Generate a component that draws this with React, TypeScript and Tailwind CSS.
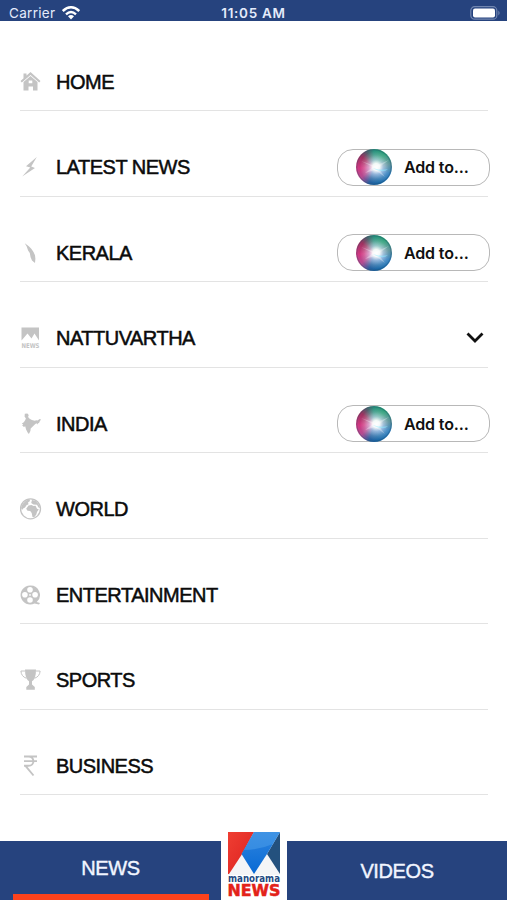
import type { ReactNode } from "react";

const icons: Record<string, ReactNode> = {
  home: (
    <>
      <path d="M3.500 2.500h3v3L3.500 8z M10.500 1L20.500 10l-1.300 1.400L10.500 3.900l-8.700 7.500L.5 10z" />
      <path
        fillRule="evenodd"
        d="M10.500 5.100l7 6V19.500h-4.500v-4H8.500v4H3.500v-8.400z M8.700 9.500v2.800h3.600V9.500z"
      />
    </>
  ),
  latest: <path d="M16.800 1L6 10.200l4.300 1.200L2.200 20.500 15 12l-3.800-1.500z" />,
  kerala: (
    <path d="M4.800 1.200l4 3 2.500 2.500 2.200 3.300 1.500 3.300.4 3.500-.4 4.200-3-2.500-1.400-3.200-.8-4.300-1.700-2.600-1.400-4z" />
  ),
  nattuvartha: (
    <>
      <path d="M1.500.5h17.500v13L14.500 6.500l-3 5-4-5-6 7z" />
      <text
        x="1.500"
        y="21"
        textLength="18"
        lengthAdjust="spacingAndGlyphs"
        className="font-['DejaVu_Sans',sans-serif] text-[6.500px] font-bold"
      >
        NEWS
      </text>
    </>
  ),
  india: (
    <path d="M4.800.8l2.600-.3 1.300 1.600-.6 1.800 1.500 1.800 2.300 1.300 3 .8 1.200-.6 1.500.2 2.100-1.500 1.300.6-1.200 1.800-.9 2-.9-.3-.4 1.600-1.300-1.300-1.500 1.300-2.300 2.200-1.800 1.700-.3 2.500-1.500 2.900-1.300-1.300-1.500-3.200-.9-3.200-1.300.7-1.800-1.700 1.200-.6-1.500-1.200 2-1.200 1.500-2.200.6-1.700-1.300-1.600z" />
  ),
  world: (
    <>
      <circle cx="10.500" cy="10.800" r="10" fill="none" stroke="currentColor" strokeWidth="1.300" />
      <path d="M1 10l1.500-4L6 2.500l3.500-1.200L10 3 8 4.500l.5 1.700-2 1L5 9.500l-1.500.8L2 12z" />
      <path d="M8.500 7.500l3-.5 2 1 2-.2 1.500 3 1.800.4-1.800 2.800-.7 2.500-2.300 3-1.500-.5-.8-4-1.500-2-2.700-.2-1.300-2z M12 2l3.500.8 3 3.200 1.500 4-1.500-.5L17 6.800l-3.500-.3-2.300-1.500z" />
    </>
  ),
  entertainment: (
    <path
      fillRule="evenodd"
      d="M10 1.500a9.500 9.500 0 1 0 4.500 17.900l4.500 1 1-1.500-3.300-.8A9.500 9.500 0 0 0 10 1.500z M10 3a2.800 2.800 0 1 1 0 5.600A2.800 2.800 0 0 1 10 3z M4.900 8a2.800 2.800 0 1 1 0 5.600 2.800 2.800 0 0 1 0-5.600z M15.100 8a2.800 2.800 0 1 1 0 5.600 2.800 2.800 0 0 1 0-5.600z M10 13.200a2.800 2.800 0 1 1 0 5.600 2.800 2.800 0 0 1 0-5.600z M10 10a.9.900 0 1 0 0 1.800.9.900 0 0 0 0-1.800z"
    />
  ),
  sports: (
    <>
      <path d="M5 .5h11q0 9.500-4 11.800v3.200l2.800 2.500V20.800H6.300v-2.800L9 15.500v-3.200Q5 9.500 5 .5z" />
      <path
        d="M5 2H.9q.3 5.500 5.600 7.300M16 2h4.100q-.3 5.500-5.600 7.300"
        fill="none"
        stroke="currentColor"
        strokeWidth="1"
      />
    </>
  ),
  business: (
    <path
      d="M4 1.500h13M4 6.100h13M4 10.800h4.500c6.500 0 6.500-9.300 0-9.300M5.500 10.800L13.500 20.500"
      fill="none"
      stroke="currentColor"
      strokeWidth="1.900"
    />
  ),
};

const items = [
  { icon: "home", label: "HOME" },
  { icon: "latest", label: "LATEST NEWS", siri: true },
  { icon: "kerala", label: "KERALA", siri: true },
  { icon: "nattuvartha", label: "NATTUVARTHA", arrow: true },
  { icon: "india", label: "INDIA", siri: true },
  { icon: "world", label: "WORLD" },
  { icon: "entertainment", label: "ENTERTAINMENT" },
  { icon: "sports", label: "SPORTS" },
  { icon: "business", label: "BUSINESS" },
];

function SiriOrb() {
  return (
    <span className="relative size-[36px] overflow-hidden rounded-full bg-[conic-gradient(from_0deg,#28917d,#279c75_40deg,#4c8790_80deg,#287abc_115deg,#1766a5_165deg,#2461a0_195deg,#b34b91_230deg,#d13882_265deg,#9d315f_310deg,#50606c_335deg,#28917d)]">
      <span className="absolute inset-0 rounded-full bg-[radial-gradient(circle_at_56%_50%,#fff_0%,#fffffff0_13%,#e4eaff99_27%,#ffffff30_45%,transparent_60%)]" />
      <svg viewBox="0 0 36 36" className="absolute inset-0">
        <path d="M5 12L19 17 33 11 22 19 29 28 19 21 9 24 17 18z" fill="#fff" opacity=".3" />
        <path d="M17 19Q24 22 32 20Q27 25 17 19" fill="#8eedff" opacity=".5" />
        <circle cx="18" cy="18" r="17.200" fill="none" stroke="#274c68" strokeOpacity=".35" />
      </svg>
    </span>
  );
}

function SiriButton() {
  return (
    <button className="flex h-[37px] w-[153px] items-center rounded-[16px] border-[1.5px] border-[#b8b8b8] bg-white pl-[18px]">
      <SiriOrb />
      <span className="ml-[12px] whitespace-nowrap font-['Inter',sans-serif] text-[16px] font-semibold tracking-[-0.15px] text-[#111]">
        Add to...
      </span>
    </button>
  );
}

function StatusBar() {
  return (
    <header className="grid h-[20.5px] grid-cols-3 bg-[#26437e] font-['Inter',sans-serif] text-[13.5px] leading-[27px] text-[#e4ebfb]">
      <div className="flex pl-[9px]">
        <span className="tracking-[0.3px]">Carrier</span>
        <svg viewBox="0 0 18 14" className="ml-[7px] mt-[6px] h-[14px] w-[18px]" fill="none" stroke="#fff" strokeWidth="2.400">
          <path d="M.8 5Q9-2.500 17.200 5M4 8.300Q9 3.800 14 8.300" />
          <path d="M6 10.300Q9 7.800 12 10.300L9 13.500z" fill="#fff" stroke="none" />
        </svg>
      </div>
      <div className="whitespace-nowrap text-center font-semibold tracking-[0.7px]">11:05 AM</div>
      <div className="flex justify-end pr-[6px] pt-[6px]">
        <svg viewBox="0 0 31 14" className="h-[14px] w-[31px]">
          <rect x=".8" y=".7" width="26" height="12.500" rx="3.800" fill="none" stroke="#7186b0" strokeWidth="1.200" />
          <rect x="3" y="2.500" width="22" height="9" rx="2" fill="#fff" />
          <path d="M28.300 4.500Q31 7 28.300 9.500z" fill="#7186b0" />
        </svg>
      </div>
    </header>
  );
}

function Logo() {
  return (
    <div className="flex w-[52px] flex-col">
      <svg viewBox="0 0 52 43" className="h-[43px] w-[52px] shrink-0">
        <defs>
          <linearGradient id="red" x2="1" y2="1">
            <stop stopColor="#ef3e32" />
            <stop offset="1" stopColor="#dc211f" />
          </linearGradient>
          <linearGradient id="blue" x2="0" y2="1">
            <stop stopColor="#2e85df" />
            <stop offset="1" stopColor="#0869d4" />
          </linearGradient>
        </defs>
        <path d="M0 0h52v43H0z" fill="#f4f5f7" />
        <path d="M0 0h26L13.500 23 1 42H0z" fill="url(#red)" />
        <path d="M52 0v42L39 22z" fill="#24517e" />
        <path d="M26 0h26L39 22 26 42 13.500 22z" fill="url(#blue)" />
        <path d="M26 0h26l-7 12Q31 18 16 18z" fill="#54a3eb" opacity=".45" />
      </svg>
      <svg viewBox="0 0 52 25" className="h-[25px] w-[52px] shrink-0 overflow-visible">
        <text
          x="0"
          y="7.200"
          textLength="52"
          lengthAdjust="spacingAndGlyphs"
          fill="#244b83"
          className="font-['DejaVu_Sans',sans-serif] text-[10.500px] font-bold"
        >
          manorama
        </text>
        <text
          x="-0.500"
          y="20.700"
          textLength="53"
          lengthAdjust="spacingAndGlyphs"
          fill="#e32219"
          stroke="#e32219"
          strokeWidth=".5"
          className="font-['DejaVu_Sans',sans-serif] text-[15.500px] font-bold"
        >
          NEWS
        </text>
      </svg>
    </div>
  );
}

export default function App() {
  return (
    <div className="flex h-[900px] w-[507px] flex-col overflow-hidden bg-white font-['Liberation_Sans',sans-serif]">
      <StatusBar />
      <main className="flex-1 pl-[20px] pr-[19px] pt-[5px]">
        {items.map((item) => (
          <div
            key={item.label}
            className="flex h-[85.550px] items-center border-b-[1.5px] border-[#e3e3e3] pt-[27.5px]"
          >
            <svg viewBox="0 0 22 22" className="size-[22px] shrink-0 text-[#c4c4c4]" fill="currentColor">
              {icons[item.icon]}
            </svg>
            <span className="ml-[14px] flex-1 whitespace-nowrap text-[20px] tracking-[-0.5px] text-[#0b0b0b] [-webkit-text-stroke:0.5px_#0b0b0b]">
              {item.label}
            </span>
            {item.siri && (
              <div className="-mr-[2px]">
                <SiriButton />
              </div>
            )}
            {item.arrow && (
              <svg viewBox="0 0 18 12" className="mr-[4px] h-[12px] w-[18px]" fill="none" stroke="#111" strokeWidth="2.800">
                <path d="M1.500 1.500L9 9l7.500-7.500" />
              </svg>
            )}
          </div>
        ))}
      </main>
      <footer className="flex h-[68px] shrink-0 items-end text-[20px] tracking-[-0.4px] text-[#f1f5ff]">
        <div className="flex h-[59px] w-[221px] flex-col items-center bg-[#26437e]">
          <span className="flex-1 pt-[12px] [-webkit-text-stroke:0.4px_#f1f5ff]">NEWS</span>
          <span className="h-[6px] w-[196px] bg-[#fc421c]" />
        </div>
        <div className="flex h-[68px] w-[66px] justify-center tracking-normal">
          <Logo />
        </div>
        <div className="flex h-[59px] flex-1 items-center justify-center bg-[#26437e] [-webkit-text-stroke:0.4px_#f1f5ff]">
          VIDEOS
        </div>
      </footer>
    </div>
  );
}
